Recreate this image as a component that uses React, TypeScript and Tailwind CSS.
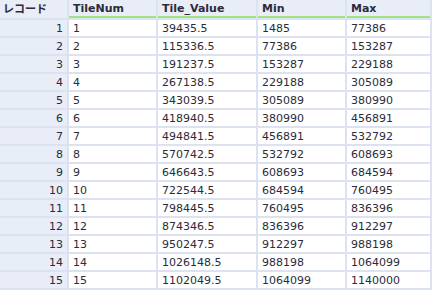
const cols = ["TileNum", "Tile_Value", "Min", "Max"];

const rows: string[][] = [
  ["1", "39435.5", "1485", "77386"],
  ["2", "115336.5", "77386", "153287"],
  ["3", "191237.5", "153287", "229188"],
  ["4", "267138.5", "229188", "305089"],
  ["5", "343039.5", "305089", "380990"],
  ["6", "418940.5", "380990", "456891"],
  ["7", "494841.5", "456891", "532792"],
  ["8", "570742.5", "532792", "608693"],
  ["9", "646643.5", "608693", "684594"],
  ["10", "722544.5", "684594", "760495"],
  ["11", "798445.5", "760495", "836396"],
  ["12", "874346.5", "836396", "912297"],
  ["13", "950247.5", "912297", "988198"],
  ["14", "1026148.5", "988198", "1064099"],
  ["15", "1102049.5", "1064099", "1140000"],
];

export default function App() {
  return (
    <div className="h-[290px] w-[436px] overflow-hidden bg-white font-['DejaVu_Sans','Noto_Sans_CJK_JP',sans-serif] text-[11px] leading-none text-[#2b2b3a]">
      <div className="grid w-max grid-cols-[67px_87px_98px_87px_83px] gap-[2px] bg-[#dce2ef] pb-[2px] pr-[2px]">
        <div className="flex h-[18px] items-center bg-[#e9edf7] px-[3px] font-bold">レコード</div>
        {cols.map((c) => (
          <div
            key={c}
            className="flex h-[18px] items-center border-b-2 border-[#9fe383] bg-[#e9edf7] px-[4px] font-bold"
          >
            {c}
          </div>
        ))}
        {rows.map((r, i) => (
          <Row key={i} n={i + 1} cells={r} />
        ))}
      </div>
    </div>
  );
}

function Row({ n, cells }: { n: number; cells: string[] }) {
  return (
    <>
      <div className="flex h-4 items-center justify-end bg-[#e9edf7] px-[4px]">{n}</div>
      {cells.map((v, j) => (
        <div key={j} className="flex h-4 items-center bg-white px-[4px]">
          {v}
        </div>
      ))}
    </>
  );
}
